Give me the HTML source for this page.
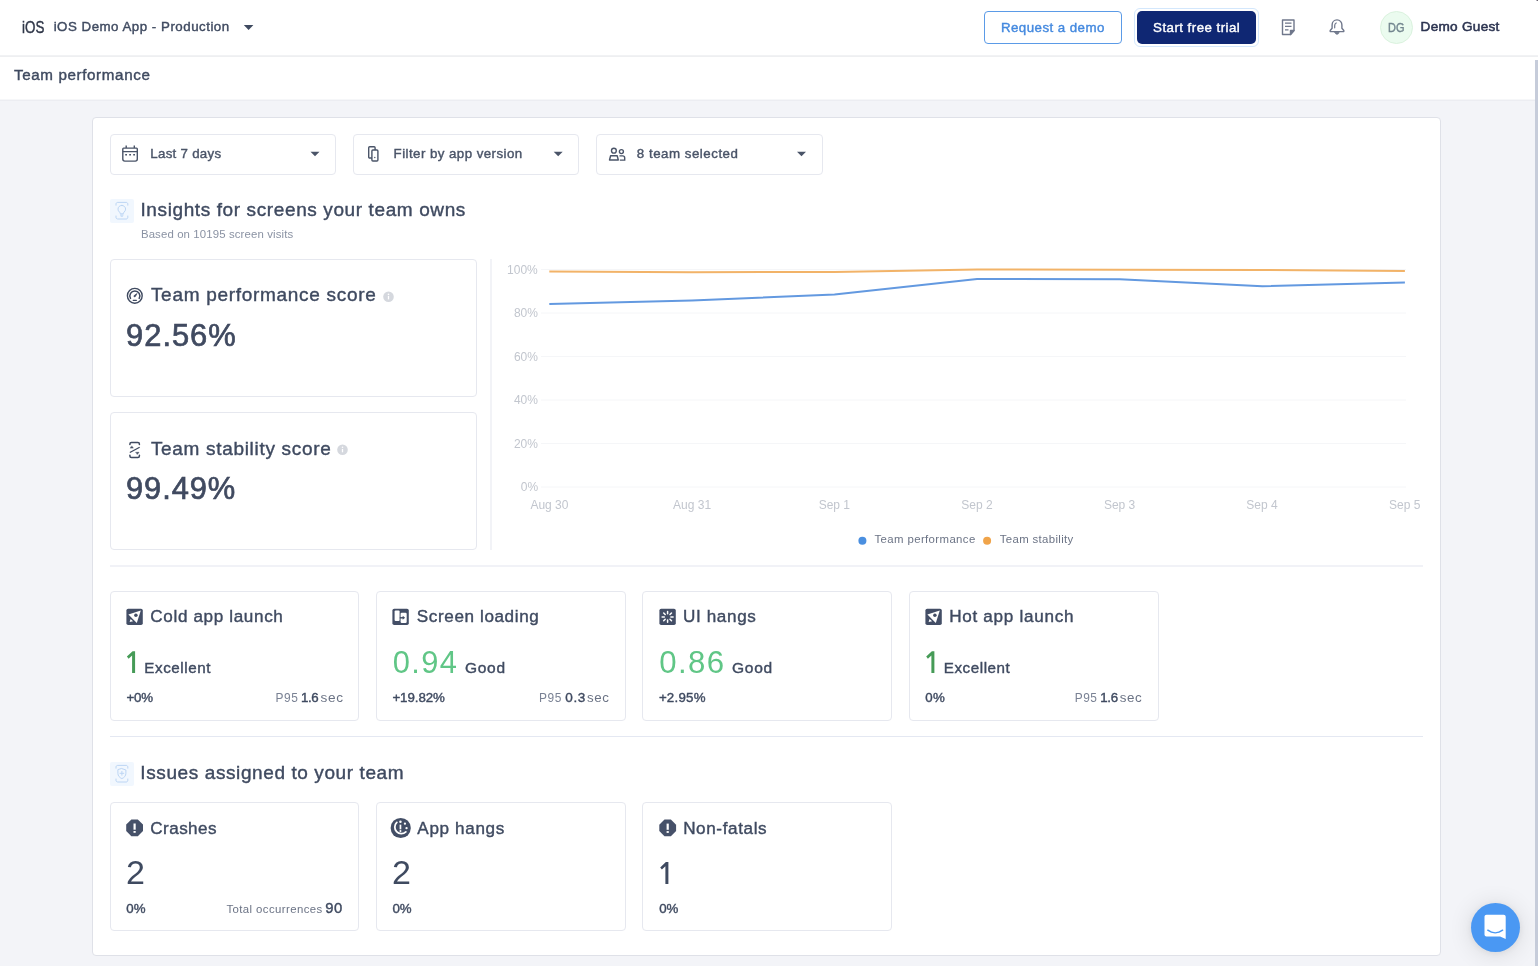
<!DOCTYPE html>
<html lang="en">
<head>
<meta charset="utf-8">
<title>Team performance</title>
<style>
*{box-sizing:border-box;margin:0;padding:0}
html,body{width:1538px;height:966px;overflow:hidden;background:#f3f4f8;font-family:"Liberation Sans",sans-serif;color:#3f4a60}
.a{position:absolute}
.t{position:absolute;white-space:nowrap;line-height:1;font-family:"Liberation Sans",sans-serif}
.box{position:absolute;background:#fff;border:1px solid #e6e8ef;border-radius:4px}
.tl{position:absolute;left:0;top:0;width:1538px;height:966px;will-change:transform}
.hl{position:absolute;height:1px;background:#e9ebf2}
svg{position:absolute;overflow:visible}
</style>
</head>
<body>
<!-- top header -->
<div class="a" style="left:0;top:0;width:1538px;height:57px;background:#fff"></div>
<div class="a" style="left:0;top:55px;width:1538px;height:1px;background:#f1f2f4"></div>
<div class="a" style="left:0;top:56px;width:1538px;height:1px;background:#eeeff1"></div>
<!-- sub header -->
<div class="a" style="left:0;top:57px;width:1538px;height:42px;background:#fff"></div>
<div class="a" style="left:0;top:99px;width:1538px;height:1px;background:#f6f7f9"></div>
<div class="a" style="left:0;top:100px;width:1538px;height:1px;background:#ecedf2"></div>

<!-- header caret -->
<svg style="left:243px;top:24px" width="9.600" height="5" viewBox="0 0 9.600 5"><g transform="translate(0.8 0.9)"><path d="M0 0h9.600L4.800 5z" fill="#3f4a60"/></g></svg>

<!-- header buttons -->
<div class="a" style="left:984px;top:11px;width:138px;height:33px;border:1px solid #5b9be7;border-radius:4px;background:#fff"></div>
<div class="a" style="left:1134px;top:8px;width:124.500px;height:38.500px;border:1px solid #d3e7fc;border-radius:6px;background:#fff"></div>
<div class="a" style="left:1137px;top:11px;width:119px;height:33px;border-radius:5px;background:#0f2773"></div>

<!-- doc icon -->
<svg style="left:1280px;top:18px" width="17" height="19" viewBox="0 0 17 19" fill="none" stroke="#6f778b" stroke-width="1.4" stroke-linejoin="round">
<path d="M2.5 2h11.5v10.5l-3.5 4h-8z"/><path d="M14 12.500h-3.500v4z" fill="#6f778b"/><path d="M5 5.2h6.5M5 8.4h6.5M5 11.8h3.5" stroke-width="1.3"/></svg>
<!-- bell icon -->
<svg style="left:1328px;top:18px" width="18" height="19" viewBox="0 0 18 19" fill="none" stroke="#6f778b" stroke-width="1.4" stroke-linejoin="round" stroke-linecap="round">
<path d="M9 1.900c-2.900 0-4.900 2.200-4.900 5.100v3.300l-1.900 2.200v1.100h13.600v-1.100l-1.900-2.200V7c0-2.900-2-5.100-4.900-5.100z"/><path d="M6.700 9.800V7.500c0-1.100.6-2 1.500-2.500" stroke-width="1.2"/><path d="M6.900 14.300h4.200c-.3 1.300-1.100 2-2.100 2s-1.800-.7-2.100-2z" fill="#6f778b" stroke-width=".8"/></svg>
<!-- avatar -->
<div class="a" style="left:1380px;top:11px;width:33px;height:33px;border-radius:50%;background:#ebfbef;border:1px solid #daf2de"></div>

<!-- main card -->
<div class="box" style="left:92px;top:117px;width:1349px;height:839px;border-color:#dfe1e8"></div>

<!-- filters -->
<div class="box" style="left:110px;top:134px;width:226px;height:41px"></div>
<div class="box" style="left:353px;top:134px;width:226px;height:41px"></div>
<div class="box" style="left:596px;top:134px;width:227px;height:41px"></div>
<svg style="left:310px;top:151px" width="9" height="4.500" viewBox="0 0 9 4.500"><g transform="translate(0.5 0.8)"><path d="M0 0h9L4.500 4.500z" fill="#4a5468"/></g></svg>
<svg style="left:553px;top:151px" width="9" height="4.500" viewBox="0 0 9 4.500"><g transform="translate(0.7 0.8)"><path d="M0 0h9L4.500 4.500z" fill="#4a5468"/></g></svg>
<svg style="left:797px;top:151px" width="9" height="4.500" viewBox="0 0 9 4.500"><g transform="translate(0 0.8)"><path d="M0 0h9L4.500 4.500z" fill="#4a5468"/></g></svg>
<!-- calendar -->
<svg style="left:121px;top:144px" width="18" height="19" viewBox="0 0 18 19" fill="none" stroke="#4a5468" stroke-width="1.400">
<path d="M2.600 4.100h12.900q.8 0 .8.800v10.200q0 2-2 2H3.800q-2 0-2-2V4.900q0-.8.800-.8z"/><path d="M1.800 7.600h14.500M5.200 1.600v2.500M13.300 1.600v2.500"/><path d="M4.200 10.700h1.800M8.200 10.700h1.800M12.200 10.700h1.800" stroke-width="1.600"/></svg>
<!-- devices -->
<svg style="left:366px;top:144px" width="14" height="19" viewBox="0 0 14 19" fill="none" stroke="#4a5468" stroke-width="1.400">
<rect x="2.700" y="2.800" width="6.400" height="11.200" rx="1"/><rect x="5.900" y="6" width="6" height="11" rx="1" fill="#fff"/><circle cx="8.800" cy="13.500" r=".7" fill="#4a5468" stroke="none"/></svg>
<!-- people -->
<svg style="left:607px;top:146px" width="20" height="16" viewBox="0 0 20 16" fill="none" stroke="#4a5468" stroke-width="1.400">
<circle cx="6.900" cy="4.700" r="2.400"/><path d="M3.600 9.800h6.600l1.100 4.200H2.500z" stroke-linejoin="round"/><circle cx="14.400" cy="5.600" r="2"/><path d="M12.500 9.900h3.200c1.300 0 2 .8 2 2v2.200h-4.900"/></svg>

<!-- section 1 title icon -->
<div class="a" style="left:110px;top:199px;width:24px;height:23.500px;background:#f1f7fe;border-radius:2px"></div>
<svg style="left:110px;top:199px" width="24" height="24" viewBox="0 0 24 24" fill="none" stroke="#bcd5f4" stroke-width="1" stroke-linecap="round">
<path d="M6 6.200V5.100c0-1 .7-1.700 1.700-1.700h8.400c1 0 1.700.7 1.700 1.700v1.100M6 17v1.300c0 1 .7 1.700 1.700 1.700h8.400c1 0 1.700-.7 1.700-1.700V17"/>
<path d="M11.800 6.400c-2.200 0-3.800 1.700-3.800 3.700 0 1.200.6 2.100 1.400 2.900.5.500.9 1.100.9 1.800h3c0-.7.400-1.300.9-1.800.8-.8 1.400-1.700 1.400-2.900 0-2-1.600-3.700-3.800-3.700zM10.500 16h2.600M11.100 17.200h1.400"/></svg>

<!-- score cards -->
<div class="box" style="left:110px;top:259px;width:367px;height:138px"></div>
<div class="box" style="left:110px;top:412px;width:367px;height:138px"></div>
<!-- speedometer -->
<svg style="left:126px;top:287px" width="18" height="18" viewBox="0 0 18 18" fill="none" stroke="#3f4a60" stroke-linecap="round">
<circle cx="8.800" cy="8.800" r="7.400" stroke-width="1.400"/><path d="M4.500 11.400a5 5 0 1 1 8.700 0" stroke-width="1.500"/><path d="M7.200 13.300h3.200" stroke-width="1.200"/><path d="M8.300 9.700c-.5-.5-.2-1.200.3-1.600l2.500-1.600-1.500 2.700c-.3.600-.9.900-1.300.5z" fill="#3f4a60" stroke-width=".6"/></svg>
<!-- stability -->
<svg style="left:128px;top:441px" width="14" height="18" viewBox="0 0 14 18" fill="none" stroke="#3f4a60" stroke-width="1.500" stroke-linecap="round" stroke-linejoin="round">
<path d="M1.900 3.400V3c0-.9.600-1.500 1.500-1.500h6.500c.9 0 1.500.6 1.500 1.500v.5M1.900 14.200v.7c0 .9.600 1.500 1.500 1.500h6.500c.9 0 1.500-.6 1.500-1.500v-.7"/><path d="M2.300 11.300l8.900-4.800" stroke-width="1.300"/><path d="M2.500 7.100h2.800l-1.400-1.900zM8 11.300h3l-1.500 1.900z" fill="#3f4a60" stroke-width=".5"/></svg>
<!-- info dots -->
<svg style="left:383px;top:291px" width="11" height="11" viewBox="0 0 11 11"><g transform="translate(0 0.3)"><circle cx="5.500" cy="5.500" r="5.300" fill="#d5d8de"/><path d="M5.500 4.700v3.400" stroke="#fff" stroke-width="1.300"/><circle cx="5.500" cy="3.100" r=".8" fill="#fff"/></g></svg>
<svg style="left:337px;top:444px" width="11" height="11" viewBox="0 0 11 11"><g transform="translate(0 0.2)"><circle cx="5.500" cy="5.500" r="5.300" fill="#d5d8de"/><path d="M5.500 4.700v3.400" stroke="#fff" stroke-width="1.300"/><circle cx="5.500" cy="3.100" r=".8" fill="#fff"/></g></svg>

<!-- vertical divider -->
<div class="a" style="left:490px;top:259px;width:2px;height:291px;background:#f2f3f7"></div>

<!-- chart -->
<svg style="left:0;top:0" width="1538" height="966" viewBox="0 0 1538 966" fill="none">
<g stroke="#f5f6f8" stroke-width="1">
<path d="M541 269.500H1406M541 313H1406M541 356.500H1406M541 400H1406M541 443.500H1406M541 487H1406"/>
</g>
<polyline points="549.300,271.400 691.900,272.300 834.500,271.900 977.100,269.500 1119.700,269.700 1262.300,270 1404.900,270.900" stroke="#f2b368" stroke-width="2" stroke-linejoin="round"/>
<polyline points="549.300,303.900 691.900,300.400 834.500,294.500 977.100,278.900 1119.700,279.300 1262.300,286.300 1404.900,282.600" stroke="#6399e0" stroke-width="2" stroke-linejoin="round"/>
<circle cx="862.400" cy="540.700" r="4" fill="#4a8fe0"/>
<circle cx="987.100" cy="540.700" r="4" fill="#f0a44a"/>
</svg>

<!-- dividers -->
<div class="hl" style="left:110px;top:565px;width:1313px;height:2px;background:#f1f2f7"></div>
<div class="hl" style="left:110px;top:736px;width:1313px;background:#e4e8f2"></div>

<!-- metric cards -->
<div class="box" style="left:110px;top:591px;width:249px;height:130px"></div>
<div class="box" style="left:376px;top:591px;width:249.500px;height:130px"></div>
<div class="box" style="left:642px;top:591px;width:249.500px;height:130px"></div>
<div class="box" style="left:909px;top:591px;width:249.500px;height:130px"></div>

<!-- rocket (cold) -->
<svg style="left:126px;top:608px" width="16.400" height="16.200" viewBox="0 0 16.400 16.200"><g transform="translate(0.4 0.8)"><rect width="16.400" height="16.200" rx="1.800" fill="#434e66"/><path d="M14.400 1.800L2 5.700l8.400 8.500z" fill="#fff"/><circle cx="9.500" cy="6.500" r="1.750" fill="#434e66"/><path d="M4.200 10.100l-1 3.200 3.500-.9z" fill="#fff"/></g></svg>
<!-- screen loading -->
<svg style="left:392px;top:608px" width="16.400" height="16.200" viewBox="0 0 16.400 16.200"><g transform="translate(0.4 0.8)"><rect width="16.400" height="16.200" rx="1.800" fill="#434e66"/><rect x="2.200" y="1.700" width="5" height="10.600" rx="1" fill="#fff"/><rect x="8.200" y="3.900" width="6.100" height="10.300" rx="1.200" fill="#fff"/><path d="M7.400 9h3.600" stroke="#434e66" stroke-width="1.500" fill="none"/><path d="M10.300 7l2.400 2-2.400 2z" fill="#434e66"/></g></svg>
<!-- ui hangs -->
<svg style="left:659px;top:608px" width="16.400" height="16.200" viewBox="0 0 16.400 16.200"><g transform="translate(0.4 0.8)"><rect width="16.400" height="16.200" rx="1.800" fill="#434e66"/><g stroke="#fff" stroke-width="1.500" stroke-linecap="round"><path d="M8.200 2.700v2.200M8.200 11.300v2.200M2.700 8.100h2.200M11.500 8.100h2.200M4.300 4.200l1.500 1.500M10.600 10.500l1.500 1.500M12.100 4.200l-1.500 1.500M5.800 10.500l-1.500 1.500"/></g></g></svg>
<!-- rocket (hot) -->
<svg style="left:925px;top:608px" width="16.400" height="16.200" viewBox="0 0 16.400 16.200"><g transform="translate(0.4 0.8)"><rect width="16.400" height="16.200" rx="1.800" fill="#434e66"/><path d="M14.400 1.800L2 5.700l8.400 8.500z" fill="#fff"/><circle cx="9.500" cy="6.500" r="1.750" fill="#434e66"/><path d="M4.200 10.100l-1 3.200 3.500-.9z" fill="#fff"/></g></svg>

<!-- section 2 title icon -->
<div class="a" style="left:110px;top:762px;width:24px;height:23.500px;background:#f1f7fe;border-radius:2px"></div>
<svg style="left:110px;top:762px" width="24" height="24" viewBox="0 0 24 24" fill="none" stroke="#bcd5f4" stroke-width="1" stroke-linecap="round" stroke-linejoin="round">
<path d="M6 6.200V5.100c0-1 .7-1.700 1.700-1.700h8.400c1 0 1.700.7 1.700 1.700v1.100M6 17v1.300c0 1 .7 1.700 1.700 1.700h8.400c1 0 1.700-.7 1.700-1.700V17"/>
<path d="M11.900 6.600l4 1.400v3.300c0 2.500-1.700 4.400-4 5.300-2.300-.9-4-2.800-4-5.300V8z"/><path d="M11.900 9.400v3.800M10 11.300h3.800"/></svg>

<!-- issue cards -->
<div class="box" style="left:110px;top:802px;width:249px;height:129px"></div>
<div class="box" style="left:376px;top:802px;width:249.500px;height:129px"></div>
<div class="box" style="left:642px;top:802px;width:249.500px;height:129px"></div>
<!-- crash octagon -->
<svg style="left:126px;top:819px" width="16.800" height="16.800" viewBox="0 0 16.800 16.800"><g transform="translate(0.2 0.4)"><path d="M5.200 0h6.400l5.200 5.200v6.400l-5.200 5.200H5.200L0 11.600V5.200z" fill="#465169"/><path d="M8.400 4.100v6.200" stroke="#fff" stroke-width="2.200"/><rect x="7.300" y="11.600" width="2.200" height="1.800" fill="#fff"/></g></svg>
<!-- app hangs -->
<svg style="left:390px;top:817px" width="20.300" height="20.300" viewBox="0 0 20.300 20.300"><g transform="translate(0.55 0.85)"><circle cx="10.150" cy="10.150" r="10.100" fill="#434e66"/><path d="M6.300 4.500A6.400 6.400 0 1 0 15.300 14" stroke="#fff" stroke-width="1.800" fill="none" stroke-linecap="round"/><circle cx="9.900" cy="4" r="1.250" fill="#fff"/><circle cx="14.400" cy="5.800" r="1.150" fill="#fff"/><circle cx="16" cy="10.300" r="1.150" fill="#fff"/><path d="M9.900 6.800v4.700" stroke="#fff" stroke-width="1.700"/><circle cx="9.900" cy="13.200" r="1" fill="#fff"/></g></svg>
<!-- non fatal octagon -->
<svg style="left:659px;top:819px" width="16.800" height="16.800" viewBox="0 0 16.800 16.800"><g transform="translate(0.3 0.5)"><path d="M5.200 0h6.400l5.200 5.200v6.400l-5.200 5.200H5.200L0 11.600V5.200z" fill="#465169"/><path d="M8.400 4.100v6.200" stroke="#fff" stroke-width="2.200"/><rect x="7.300" y="11.600" width="2.200" height="1.800" fill="#fff"/></g></svg>

<!-- big digit 1 glyphs -->
<svg style="left:126px;top:651px" width="8.200" height="21.800" viewBox="0 0 8.200 21.800"><g transform="translate(0.9 0.2)"><path d="M8.200 0H5.700L0 5.400l1.700 2.100 3.500-3.300v17.600h3z" fill="#469b57"/></g></svg>
<svg style="left:926px;top:651px" width="8.200" height="21.800" viewBox="0 0 8.200 21.800"><g transform="translate(0.2 0.2)"><path d="M8.200 0H5.700L0 5.400l1.700 2.100 3.500-3.300v17.600h3z" fill="#469b57"/></g></svg>
<svg style="left:660px;top:862px" width="8.200" height="21.800" viewBox="0 0 8.200 21.800"><g transform="translate(0.2 0.1)"><path d="M8.200 0H5.700L0 5.400l1.700 2.100 3.500-3.300v17.600h3z" fill="#3f4a60"/></g></svg>
<div class="a" style="left:1536px;top:0;width:2px;height:1px;background:#b9b6bd"></div><div class="a" style="left:1537px;top:0;width:1px;height:1px;background:#6d6773"></div>
<!-- scrollbar -->
<div class="a" style="left:1535px;top:60px;width:3px;height:906px;background:#c6ccda"></div>

<!-- intercom launcher -->
<div class="a" style="left:1471px;top:903px;width:49px;height:49px;border-radius:50%;background:#4a98f3;box-shadow:0 1px 6px rgba(0,0,0,.06),0 2px 24px rgba(0,0,0,.12)"></div>
<svg style="left:1484px;top:914px" width="22" height="25" viewBox="0 0 22 25"><g transform="translate(0.5 0.5)"><path d="M2 .3h17.200c1.100 0 2 .9 2 2V24.600l-5.600-2.700H2c-1.100 0-2-.9-2-2V2.300c0-1.100.9-2 2-2z" fill="#fff"/><path d="M3.300 15.700c4.500 3.300 10.300 3.300 14.800 0" stroke="#4a98f3" stroke-width="1.500" fill="none" stroke-linecap="round"/></g></svg>

<div class="tl">
<span class="t" style="left:22.23px;top:20px;transform:scaleX(0.8550);transform-origin:0.77px 0;font-size:15.67px;font-weight:400;-webkit-text-stroke:.4px;color:#2f3648">iOS</span>
<span class="t" style="left:53.65px;top:20px;letter-spacing:0.507px;font-size:13.3px;font-weight:400;-webkit-text-stroke:.4px;color:#3f4a60">iOS Demo App - Production</span>
<span class="t" style="left:13.97px;top:67px;letter-spacing:0.618px;font-size:15.2px;font-weight:400;-webkit-text-stroke:.4px;color:#3f4a60">Team performance</span>
<span class="t" style="left:1000.99px;top:21px;letter-spacing:0.446px;font-size:13.3px;font-weight:400;-webkit-text-stroke:.4px;color:#4489df">Request a demo</span>
<span class="t" style="left:1153.05px;top:21px;letter-spacing:0.463px;font-size:13.3px;font-weight:400;-webkit-text-stroke:.4px;color:#ffffff">Start free trial</span>
<span class="t" style="left:1388.08px;top:23px;transform:scaleX(0.9198);transform-origin:0.72px 0;font-size:11.88px;font-weight:400;-webkit-text-stroke:.4px;color:#73868f">DG</span>
<span class="t" style="left:1420.62px;top:20px;letter-spacing:0.279px;font-size:13.59px;font-weight:400;-webkit-text-stroke:.55px;color:#2b3350">Demo Guest</span>
<span class="t" style="left:150.29px;top:147px;letter-spacing:0.279px;font-size:13.3px;font-weight:400;-webkit-text-stroke:.4px;color:#4a5468">Last 7 days</span>
<span class="t" style="left:393.59px;top:147px;letter-spacing:0.446px;font-size:13.3px;font-weight:400;-webkit-text-stroke:.4px;color:#4a5468">Filter by app version</span>
<span class="t" style="left:636.84px;top:147px;letter-spacing:0.515px;font-size:13.3px;font-weight:400;-webkit-text-stroke:.4px;color:#4a5468">8 team selected</span>
<span class="t" style="left:140.47px;top:200px;letter-spacing:0.611px;font-size:19.0px;font-weight:400;-webkit-text-stroke:.4px;color:#3f4a60">Insights for screens your team owns</span>
<span class="t" style="left:140.91px;top:229px;letter-spacing:0.128px;font-size:11.4px;font-weight:400;color:#8a92a3">Based on 10195 screen visits</span>
<span class="t" style="left:150.92px;top:285px;letter-spacing:0.703px;font-size:19.0px;font-weight:400;-webkit-text-stroke:.4px;color:#3f4a60">Team performance score</span>
<span class="t" style="left:126.06px;top:321px;letter-spacing:0.996px;font-size:30.88px;font-weight:400;-webkit-text-stroke:.7px;color:#404a60">92.56%</span>
<span class="t" style="left:150.92px;top:439px;letter-spacing:0.683px;font-size:19.0px;font-weight:400;-webkit-text-stroke:.4px;color:#3f4a60">Team stability score</span>
<span class="t" style="left:126.06px;top:474px;letter-spacing:0.896px;font-size:30.88px;font-weight:400;-webkit-text-stroke:.7px;color:#404a60">99.49%</span>
<span class="t" style="left:874.51px;top:534px;letter-spacing:0.385px;font-size:11.4px;font-weight:400;color:#6b7385">Team performance</span>
<span class="t" style="left:999.81px;top:534px;letter-spacing:0.347px;font-size:11.4px;font-weight:400;color:#6b7385">Team stability</span>
<span class="t" style="left:150.32px;top:608px;letter-spacing:0.643px;font-size:17.1px;font-weight:400;-webkit-text-stroke:.4px;color:#3f4a60">Cold app launch</span>
<span class="t" style="left:144.32px;top:660px;letter-spacing:0.569px;font-size:15.2px;font-weight:400;-webkit-text-stroke:.4px;color:#3f4a60">Excellent</span>
<span class="t" style="left:126.38px;top:691px;letter-spacing:-0.161px;font-size:13.3px;font-weight:400;-webkit-text-stroke:.4px;color:#3f4a60">+0%</span>
<span class="t" style="left:275.48px;top:693px;letter-spacing:0.557px;font-size:11.93px;font-weight:400;color:#7a8294">P95</span>
<span class="t" style="left:300.96px;top:691px;letter-spacing:-0.349px;font-size:13.3px;font-weight:400;-webkit-text-stroke:.4px;color:#3f4a60">1.6</span>
<span class="t" style="left:320.56px;top:691px;letter-spacing:0.597px;font-size:13.63px;font-weight:400;color:#6b7385">sec</span>
<span class="t" style="left:416.82px;top:608px;letter-spacing:0.608px;font-size:17.1px;font-weight:400;-webkit-text-stroke:.4px;color:#3f4a60">Screen loading</span>
<span class="t" style="left:392.80px;top:648px;letter-spacing:1.344px;font-size:30.86px;font-weight:400;color:#60c686">0.94</span>
<span class="t" style="left:464.99px;top:660px;letter-spacing:0.720px;font-size:15.52px;font-weight:400;-webkit-text-stroke:.4px;color:#3f4a60">Good</span>
<span class="t" style="left:392.38px;top:691px;letter-spacing:-0.058px;font-size:13.3px;font-weight:400;-webkit-text-stroke:.4px;color:#3f4a60">+19.82%</span>
<span class="t" style="left:539.08px;top:693px;letter-spacing:0.557px;font-size:11.93px;font-weight:400;color:#7a8294">P95</span>
<span class="t" style="left:565.30px;top:691px;letter-spacing:0.632px;font-size:13.51px;font-weight:400;-webkit-text-stroke:.4px;color:#3f4a60">0.3</span>
<span class="t" style="left:587.06px;top:691px;letter-spacing:0.610px;font-size:13.31px;font-weight:400;color:#6b7385">sec</span>
<span class="t" style="left:683.00px;top:608px;letter-spacing:0.630px;font-size:17.1px;font-weight:400;-webkit-text-stroke:.4px;color:#3f4a60">UI hangs</span>
<span class="t" style="left:659.30px;top:647px;letter-spacing:1.392px;font-size:31.19px;font-weight:400;color:#60c686">0.86</span>
<span class="t" style="left:732.09px;top:660px;letter-spacing:0.686px;font-size:15.56px;font-weight:400;-webkit-text-stroke:.4px;color:#3f4a60">Good</span>
<span class="t" style="left:658.88px;top:691px;letter-spacing:0.232px;font-size:13.3px;font-weight:400;-webkit-text-stroke:.4px;color:#3f4a60">+2.95%</span>
<span class="t" style="left:949.13px;top:608px;letter-spacing:0.722px;font-size:17.1px;font-weight:400;-webkit-text-stroke:.4px;color:#3f4a60">Hot app launch</span>
<span class="t" style="left:943.82px;top:660px;letter-spacing:0.544px;font-size:15.2px;font-weight:400;-webkit-text-stroke:.4px;color:#3f4a60">Excellent</span>
<span class="t" style="left:925.32px;top:691px;letter-spacing:0.292px;font-size:13.3px;font-weight:400;-webkit-text-stroke:.4px;color:#3f4a60">0%</span>
<span class="t" style="left:1074.78px;top:693px;letter-spacing:0.511px;font-size:11.88px;font-weight:400;color:#7a8294">P95</span>
<span class="t" style="left:1100.26px;top:691px;letter-spacing:-0.349px;font-size:13.3px;font-weight:400;-webkit-text-stroke:.4px;color:#3f4a60">1.6</span>
<span class="t" style="left:1119.86px;top:691px;letter-spacing:0.546px;font-size:13.38px;font-weight:400;color:#6b7385">sec</span>
<span class="t" style="left:140.37px;top:763px;letter-spacing:0.596px;font-size:19.0px;font-weight:400;-webkit-text-stroke:.4px;color:#3f4a60">Issues assigned to your team</span>
<span class="t" style="left:150.32px;top:820px;letter-spacing:0.423px;font-size:17.1px;font-weight:400;-webkit-text-stroke:.4px;color:#3f4a60">Crashes</span>
<span class="t" style="left:417.33px;top:820px;letter-spacing:0.652px;font-size:17.1px;font-weight:400;-webkit-text-stroke:.4px;color:#3f4a60">App hangs</span>
<span class="t" style="left:683.14px;top:820px;letter-spacing:0.623px;font-size:17.1px;font-weight:400;-webkit-text-stroke:.4px;color:#3f4a60">Non-fatals</span>
<span class="t" style="left:125.97px;top:855px;font-size:34.05px;font-weight:400;color:#3f4a60">2</span>
<span class="t" style="left:391.97px;top:855px;font-size:34.05px;font-weight:400;color:#3f4a60">2</span>
<span class="t" style="left:126.32px;top:902px;letter-spacing:-0.008px;font-size:13.3px;font-weight:400;-webkit-text-stroke:.4px;color:#3f4a60">0%</span>
<span class="t" style="left:392.52px;top:902px;letter-spacing:-0.208px;font-size:13.3px;font-weight:400;-webkit-text-stroke:.4px;color:#3f4a60">0%</span>
<span class="t" style="left:659.32px;top:902px;letter-spacing:-0.108px;font-size:13.3px;font-weight:400;-webkit-text-stroke:.4px;color:#3f4a60">0%</span>
<span class="t" style="left:226.41px;top:904px;letter-spacing:0.407px;font-size:11.4px;font-weight:400;color:#6b7385">Total occurrences</span>
<span class="t" style="left:325.15px;top:901px;letter-spacing:0.675px;font-size:14.85px;font-weight:400;-webkit-text-stroke:.4px;color:#3f4a60">90</span>
<span class="t" style="left:507.09px;top:264px;font-size:12px;color:#c2c6ce">100%</span>
<span class="t" style="left:513.91px;top:307px;font-size:12px;color:#c2c6ce">80%</span>
<span class="t" style="left:513.91px;top:351px;font-size:12px;color:#c2c6ce">60%</span>
<span class="t" style="left:513.91px;top:394px;font-size:12px;color:#c2c6ce">40%</span>
<span class="t" style="left:513.91px;top:438px;font-size:12px;color:#c2c6ce">20%</span>
<span class="t" style="left:520.74px;top:481px;font-size:12px;color:#c2c6ce">0%</span>
<span class="t" style="left:530.39px;top:499px;font-size:12px;color:#c2c6ce">Aug 30</span>
<span class="t" style="left:673.02px;top:499px;font-size:12px;color:#c2c6ce">Aug 31</span>
<span class="t" style="left:818.68px;top:499px;font-size:12px;color:#c2c6ce">Sep 1</span>
<span class="t" style="left:961.28px;top:499px;font-size:12px;color:#c2c6ce">Sep 2</span>
<span class="t" style="left:1103.92px;top:499px;font-size:12px;color:#c2c6ce">Sep 3</span>
<span class="t" style="left:1246.29px;top:499px;font-size:12px;color:#c2c6ce">Sep 4</span>
<span class="t" style="left:1389.12px;top:499px;font-size:12px;color:#c2c6ce">Sep 5</span>
</div>
</body>
</html>
